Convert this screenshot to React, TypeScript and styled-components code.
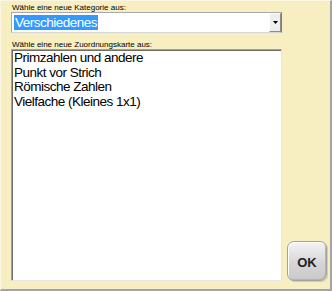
import React from "react";
import styled, { createGlobalStyle } from "styled-components";

const Global = createGlobalStyle`
  html, body { margin: 0; padding: 0; }
  body { width: 332px; height: 291px; overflow: hidden; background: #a3a3a3; }
`;

const Panel = styled.div`
  box-sizing: border-box;
  width: 332px;
  height: 291px;
  background: #f7efc1;
  border-top: 1px solid #fbf7e2;
  border-left: 1px solid #fbf7e2;
  border-right: 2px solid #a3a3a3;
  border-bottom: 2px solid #a3a3a3;
  padding: 2px 0 0 10px;
  display: grid;
  grid-template-columns: 271px 40px;
  grid-template-rows: 9px 21px 16px 232px;
  column-gap: 5px;
  font-family: "Liberation Sans", Arial, sans-serif;
`;

const Label = styled.div`
  grid-column: 1 / 2;
  font-size: 8px;
  line-height: 9px;
  color: #000;
  padding-left: 1px;
  white-space: nowrap;
  align-self: end;
`;

const Combo = styled.div`
  grid-column: 1 / 2;
  box-sizing: border-box;
  height: 21px;
  background: #fff;
  border: 1px solid #a9a9a9;
  border-right-color: #7e7e7e;
  border-bottom-color: #d7d7d7;
  display: flex;
  align-items: center;
  padding-left: 2px;
`;

const Selected = styled.span`
  background: #3399ff;
  color: #fff;
  font-size: 13.5px;
  letter-spacing: -0.5px;
  line-height: 15px;
  padding: 0 1px;
  flex: 0 0 auto;
`;

const DropButton = styled.div`
  margin-left: auto;
  box-sizing: border-box;
  width: 12px;
  height: 19px;
  background: #eeeeee;
  border-left: 1px solid #fdfdfd;
  border-top: 1px solid #fdfdfd;
  border-right: 1px solid #8c8c8c;
  border-bottom: 1px solid #8c8c8c;
  display: flex;
  align-items: center;
  justify-content: center;
`;

const ListRow = styled.div`
  grid-column: 1 / 3;
  display: flex;
  align-items: flex-end;
  gap: 5px;
`;

const ListBox = styled.div`
  box-sizing: border-box;
  width: 271px;
  height: 232px;
  background: #fff;
  border-top: 1px solid #a0a0a0;
  border-left: 1px solid #a0a0a0;
  border-right: 1px solid #e6e6e6;
  border-bottom: 1px solid #e6e6e6;
  box-shadow: inset 1px 1px 0 #6d6d6d;
  padding: 1px 0 0 2px;
`;

const Item = styled.div`
  font-size: 13.5px;
  letter-spacing: -0.5px;
  line-height: 14.5px;
  color: #000;
  white-space: nowrap;
`;

const OkButton = styled.button`
  box-sizing: border-box;
  width: 40px;
  height: 40px;
  border: 1px solid #a2a2a2;
  border-radius: 7px;
  background: linear-gradient(#f4f4f4, #d6d6d6 55%, #c9c9c9);
  box-shadow: inset 1px 1px 0 #ffffff, inset -1px -1px 0 #b5b5b5, 1px 1px 1px rgba(0,0,0,0.15);
  font-family: "Liberation Sans", Arial, sans-serif;
  font-weight: bold;
  font-size: 13px;
  color: #1e1e1e;
  padding: 2px 0 0 0;
  display: flex;
  align-items: center;
  justify-content: center;
`;

const items = [
  "Primzahlen und andere",
  "Punkt vor Strich",
  "Römische Zahlen",
  "Vielfache (Kleines 1x1)",
];

export default function App() {
  return (
    <>
      <Global />
      <Panel>
        <Label>Wähle eine neue Kategorie aus:</Label>
        <Combo>
          <Selected>Verschiedenes</Selected>
          <DropButton>
            <svg width="5" height="3" viewBox="0 0 5 3">
              <path d="M0 0h5L2.5 3z" fill="#000" />
            </svg>
          </DropButton>
        </Combo>
        <Label>Wähle eine neue Zuordnungskarte aus:</Label>
        <ListRow>
          <ListBox>
            {items.map((t) => (
              <Item key={t}>{t}</Item>
            ))}
          </ListBox>
          <OkButton>OK</OkButton>
        </ListRow>
      </Panel>
    </>
  );
}
